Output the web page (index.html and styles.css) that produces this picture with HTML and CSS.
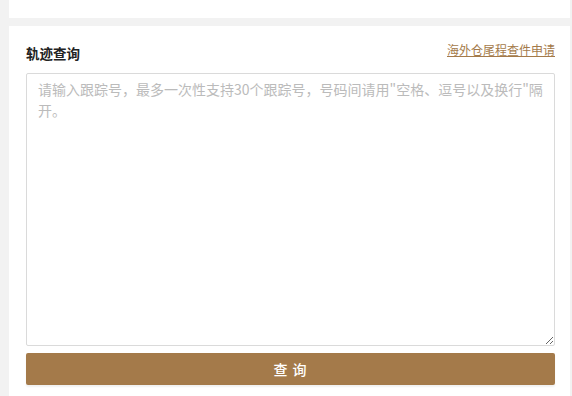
FILE: index.html
```html
<!DOCTYPE html>
<html lang="zh-CN">
<head>
  <meta charset="UTF-8" />
  <meta name="viewport" content="width=device-width, initial-scale=1.0" />
  <title>轨迹查询</title>
  <link rel="stylesheet" href="styles.css">
</head>
<body>
  <div class="page">
    <div class="card card-top"></div>
    <div class="card track-card">
      <div class="track-header">
        <div class="track-title">轨迹查询</div>
        <a class="track-link" href="#">海外仓尾程查件申请</a>
      </div>
      <textarea class="track-input" placeholder="请输入跟踪号，最多一次性支持30个跟踪号，号码间请用&quot;空格、逗号以及换行&quot;隔开。"></textarea>
      <button class="btn-query" type="button">查 询</button>
    </div>
  </div>
</body>
</html>
```

FILE: styles.css
```css
* {
  margin: 0;
  padding: 0;
  box-sizing: border-box;
  font-family: "Noto Sans CJK SC", "Liberation Sans", sans-serif;
}

body {
  background-color: #f2f2f2;
  height: 100vh;
  overflow: hidden;
}

.page {
  display: flex;
  flex-direction: column;
  gap: 8px;
  padding: 0 2px 0 9px;
}

.card {
  background-color: #ffffff;
}

.card-top {
  height: 18px;
}

.track-card {
  display: flex;
  flex-direction: column;
  padding: 17px 15px 20px 17px;
}

.track-header {
  display: flex;
  justify-content: space-between;
  align-items: flex-start;
  margin-bottom: 10px;
}

.track-title {
  font-size: 13.5px;
  line-height: 20px;
  font-weight: bold;
  color: #222222;
}

.track-link {
  font-size: 12px;
  line-height: 14px;
  color: #a47a4a;
  text-decoration: underline;
}

.track-input {
  width: 100%;
  height: 273px;
  padding: 5px 11px;
  border: 1px solid #dadada;
  border-radius: 2px;
  font-size: 14px;
  line-height: 21px;
  color: #333333;
  outline: none;
}

.track-input::placeholder {
  color: #bbbbbb;
}

.btn-query {
  margin-top: 7px;
  height: 32px;
  background-color: #a47a4a;
  color: #ffffff;
  border: none;
  border-radius: 2px;
  font-size: 14px;
  font-weight: 500;
  letter-spacing: 1px;
  box-shadow: 0 2px 2px rgba(0, 0, 0, 0.06);
  cursor: pointer;
}
```
